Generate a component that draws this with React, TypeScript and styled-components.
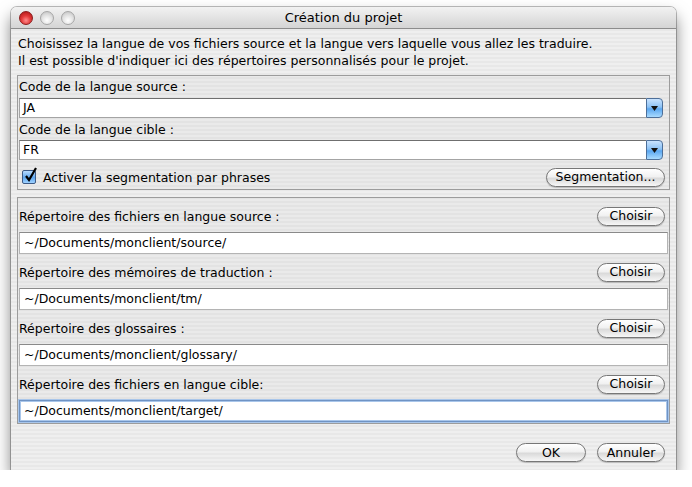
import React from "react";
import styled, { createGlobalStyle } from "styled-components";

const GlobalStyle = createGlobalStyle`
  body {
    margin: 0;
    background: #ffffff;
    font-family: "DejaVu Sans", "Liberation Sans", sans-serif;
    color: #000;
  }
`;

const Page = styled.div`
  padding: 7px 0 0 11px;
`;

const Window = styled.div`
  width: 665px;
  height: 463px;
  display: flex;
  flex-direction: column;
  border-radius: 6px 6px 0 0;
  background: repeating-linear-gradient(
    to bottom,
    #efefef 0px,
    #efefef 2px,
    #e8e8e8 2px,
    #e8e8e8 4px
  );
  box-shadow: 0 0 0 1px rgba(0, 0, 0, 0.25), 0 9px 16px rgba(0, 0, 0, 0.5);
  overflow: hidden;
`;

const TitleBar = styled.div`
  height: 21px;
  flex: none;
  display: flex;
  align-items: center;
  position: relative;
  border-bottom: 1px solid #8c8c8c;
  background: linear-gradient(to bottom, #f2f2f2, #d4d4d4);
`;

const Lights = styled.div`
  display: flex;
  gap: 7px;
  padding-left: 8px;
`;

const Light = styled.span<{ $red?: boolean }>`
  width: 14px;
  height: 14px;
  border-radius: 50%;
  box-sizing: border-box;
  border: 1px solid ${(p) => (p.$red ? "#8a1c1c" : "#a6a6a6")};
  background: ${(p) =>
    p.$red
      ? "radial-gradient(circle at 50% 70%, #ff8c8c 0%, #e23a3a 45%, #a51313 100%)"
      : "radial-gradient(circle at 50% 70%, #ffffff 0%, #e2e2e2 50%, #bdbdbd 100%)"};
`;

const Title = styled.div`
  position: absolute;
  left: 0;
  right: 0;
  text-align: center;
  font-size: 13px;
  pointer-events: none;
`;

const Body = styled.div`
  flex: 1;
  display: flex;
  flex-direction: column;
  padding: 6px 6px 0 6px;
`;

const Intro = styled.p`
  margin: 0 0 0 1px;
  font-size: 12.5px;
  line-height: 17px;
`;

const Group = styled.div<{ $top: number; $pad: string }>`
  margin-top: ${(p) => p.$top}px;
  border: 1px solid #9c9c9c;
  padding: ${(p) => p.$pad};
  display: flex;
  flex-direction: column;
  background: rgba(0, 0, 0, 0.02);
`;

const Label = styled.div<{ $gap?: number }>`
  margin-top: ${(p) => p.$gap || 0}px;
  font-size: 12.5px;
  line-height: 17px;
  height: 17px;
`;

const Combo = styled.div<{ $gap: number }>`
  margin-top: ${(p) => p.$gap}px;
  margin-right: 5px;
  height: 20px;
  display: flex;
`;

const ComboField = styled.div`
  flex: 1;
  box-sizing: border-box;
  border: 1px solid #a4a4a4;
  border-top-color: #6f6f6f;
  border-right: none;
  background: #fff;
  font-size: 12.5px;
  line-height: 18px;
  padding-left: 3px;
`;

const ComboArrow = styled.div`
  width: 17px;
  box-sizing: border-box;
  border: 1px solid #4d6f99;
  border-radius: 0 4px 4px 0;
  background: linear-gradient(
    to bottom,
    #c9e3ff 0%,
    #8cc2f5 45%,
    #5aa6f0 55%,
    #a9dbff 100%
  );
  display: flex;
  align-items: center;
  justify-content: center;
`;

const Row = styled.div<{ $gap: number }>`
  margin-top: ${(p) => p.$gap}px;
  height: 20px;
  display: flex;
  align-items: center;
  justify-content: space-between;
  font-size: 12.5px;
`;

const Check = styled.label`
  display: flex;
  align-items: center;
  gap: 7px;
  margin-left: 3px;
`;

const Box = styled.span`
  width: 14px;
  height: 14px;
  box-sizing: border-box;
  border: 1px solid #3c5a86;
  border-radius: 2px;
  background: linear-gradient(to bottom, #b9dcff, #5ea6ef 55%, #9fd2ff);
  position: relative;
`;

const Tick = styled.svg`
  position: absolute;
  left: 1px;
  top: -4px;
`;

const PillButton = styled.button<{ $w: number }>`
  width: ${(p) => p.$w}px;
  height: 19px;
  margin-right: 3px;
  padding: 0;
  border: 1px solid #777;
  border-radius: 10px;
  background: linear-gradient(to bottom, #ffffff 0%, #f1f1f1 45%, #dadada 55%, #f7f7f7 100%);
  box-shadow: 0 1px 1px rgba(0, 0, 0, 0.2);
  font-family: "DejaVu Sans", "Liberation Sans", sans-serif;
  font-size: 12.5px;
  color: #000;
  line-height: 16px;
`;

const Field = styled.div<{ $gap: number; $focus?: boolean }>`
  margin-top: ${(p) => p.$gap}px;
  height: 22px;
  box-sizing: border-box;
  border: 1px solid #b4b4b4;
  border-top-color: #8a8a8a;
  background: #fff;
  font-size: 12.5px;
  line-height: 20px;
  padding-left: 4px;
  ${(p) =>
    p.$focus &&
    `border-color: #6f93c4; box-shadow: inset 0 0 0 1px #a9c6ea, 0 0 0 1px #a9c6ea;`}
`;

const Footer = styled.div`
  margin-top: 19px;
  display: flex;
  justify-content: flex-end;
  gap: 8px;
  padding-right: 2px;
`;

const dirs = [
  { label: "Répertoire des fichiers en langue source :", path: "~/Documents/monclient/source/" },
  { label: "Répertoire des mémoires de traduction :", path: "~/Documents/monclient/tm/" },
  { label: "Répertoire des glossaires :", path: "~/Documents/monclient/glossary/" },
  { label: "Répertoire des fichiers en langue cible:", path: "~/Documents/monclient/target/" },
];

const Arrow = () => (
  <svg width="7" height="5" viewBox="0 0 7 5">
    <path d="M0 0 L7 0 L3.5 5 Z" fill="#111" />
  </svg>
);

export default function App() {
  return (
    <Page>
      <GlobalStyle />
      <Window>
        <TitleBar>
          <Lights>
            <Light $red />
            <Light />
            <Light />
          </Lights>
          <Title>Création du projet</Title>
        </TitleBar>
        <Body>
          <Intro>
            Choisissez la langue de vos fichiers source et la langue vers laquelle vous allez les traduire.
            <br />
            Il est possible d'indiquer ici des répertoires personnalisés pour le projet.
          </Intro>

          <Group $top={6} $pad="2px 1px 2px 1px">
            <Label>Code de la langue source :</Label>
            <Combo $gap={3}>
              <ComboField>JA</ComboField>
              <ComboArrow>
                <Arrow />
              </ComboArrow>
            </Combo>
            <Label $gap={3}>Code de la langue cible :</Label>
            <Combo $gap={2}>
              <ComboField>FR</ComboField>
              <ComboArrow>
                <Arrow />
              </ComboArrow>
            </Combo>
            <Row $gap={7}>
              <Check>
                <Box>
                  <Tick width="14" height="15" viewBox="0 0 14 15">
                    <path d="M2 9 L5 13 L12 1" stroke="#000" strokeWidth="2.2" fill="none" />
                  </Tick>
                </Box>
                Activer la segmentation par phrases
              </Check>
              <PillButton $w={119}>Segmentation...</PillButton>
            </Row>
          </Group>

          <Group $top={7} $pad="8px 1px 1px 1px">
            {dirs.map((d, i) => (
              <React.Fragment key={d.label}>
                <Row $gap={i === 0 ? 0 : 8}>
                  <span>{d.label}</span>
                  <PillButton $w={68}>Choisir</PillButton>
                </Row>
                <Field $gap={6} $focus={i === dirs.length - 1}>
                  {d.path}
                </Field>
              </React.Fragment>
            ))}
          </Group>

          <Footer>
            <PillButton $w={70}>OK</PillButton>
            <PillButton $w={68}>Annuler</PillButton>
          </Footer>
        </Body>
      </Window>
    </Page>
  );
}
